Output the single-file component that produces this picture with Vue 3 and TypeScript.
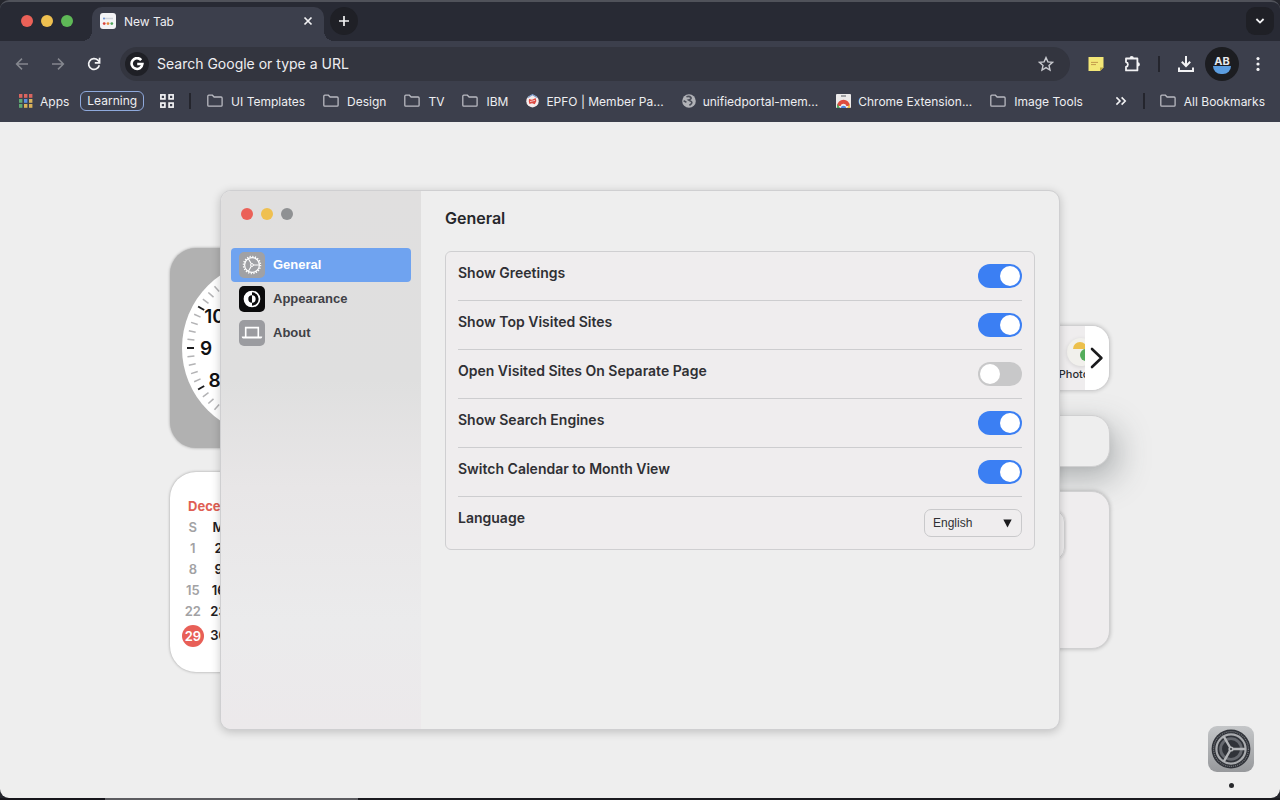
<script setup lang="ts">
import { ref } from 'vue'

interface Bookmark {
  label: string
  icon: 'folder' | 'epfo' | 'globe' | 'store'
}

interface Setting {
  id: string
  label: string
  on: boolean
}

const bookmarks: Bookmark[] = [
  { label: 'UI Templates', icon: 'folder' },
  { label: 'Design', icon: 'folder' },
  { label: 'TV', icon: 'folder' },
  { label: 'IBM', icon: 'folder' },
  { label: 'EPFO | Member Pa...', icon: 'epfo' },
  { label: 'unifiedportal-mem...', icon: 'globe' },
  { label: 'Chrome Extension...', icon: 'store' },
  { label: 'Image Tools', icon: 'folder' },
]

const appColors = ['#d9655f', '#d9655f', '#d9655f', '#5fa873', '#5b8fe0', '#d9b25a', '#5fa873', '#d9b25a', '#d9b25a']

const sections = ['General', 'Appearance', 'About']
const active = ref('General')

const settings = ref<Setting[]>([
  { id: 'greetings', label: 'Show Greetings', on: true },
  { id: 'top-sites', label: 'Show Top Visited Sites', on: true },
  { id: 'separate-page', label: 'Open Visited Sites On Separate Page', on: false },
  { id: 'engines', label: 'Show Search Engines', on: true },
  { id: 'month-view', label: 'Switch Calendar to Month View', on: true },
])
const language = ref('English')
const query = ref('')

const ticks = Array.from({ length: 60 }, (_, i) => i)
const hours = Array.from({ length: 12 }, (_, i) => {
  const angle = ((i + 1) * Math.PI) / 6
  return { n: i + 1, x: 100 + 64 * Math.sin(angle), y: 100 - 64 * Math.cos(angle) }
})

const weekdays = ['S', 'M', 'T', 'W', 'T', 'F', 'S']
const weeks = Array.from({ length: 5 }, (_, w) =>
  Array.from({ length: 7 }, (_, d) => w * 7 + d + 1).map((n) => (n <= 31 ? n : null)),
)
const today = 29
</script>

<template>
  <div class="browser">
    <header class="chrome">
      <div class="tabstrip">
        <div class="lights">
          <span class="light red"></span>
          <span class="light yellow"></span>
          <span class="light green"></span>
        </div>
        <div class="tab">
          <svg class="favicon" viewBox="0 0 16 16" aria-hidden="true">
            <rect width="16" height="16" rx="3" fill="#f3f3f5" />
            <path d="M3 5.5h10" stroke="#cfd3da" stroke-width="1.4" />
            <circle cx="4" cy="5.5" r="1" fill="#6b93d6" />
            <circle cx="4.2" cy="10.6" r="1.4" fill="#d9443c" />
            <circle cx="8" cy="10.6" r="1.4" fill="#e58a3a" />
            <circle cx="11.8" cy="10.6" r="1.4" fill="#4ea35a" />
          </svg>
          <span class="tab-title">New Tab</span>
          <button class="icon-btn tab-close" aria-label="Close tab">
            <svg width="10" height="10" viewBox="0 0 10 10"><path d="M1.5 1.5l7 7M8.5 1.5l-7 7" stroke="#f2f2f4" stroke-width="1.7" /></svg>
          </button>
        </div>
        <button class="icon-btn new-tab" aria-label="New tab">
          <svg width="12" height="12" viewBox="0 0 12 12"><path d="M6 1v10M1 6h10" stroke="#f2f2f4" stroke-width="1.7" /></svg>
        </button>
        <button class="icon-btn tab-search" aria-label="Search tabs">
          <svg width="10" height="8" viewBox="0 0 10 8"><path d="M1.4 2l3.6 3.6L8.6 2" fill="none" stroke="#f2f2f4" stroke-width="1.8" /></svg>
        </button>
      </div>

      <div class="toolbar">
        <button class="icon-btn tool" aria-label="Back">
          <svg width="14" height="14" viewBox="0 0 14 14"><path d="M13 7H2M7 1.6L1.6 7 7 12.4" fill="none" stroke="#85878f" stroke-width="1.5" /></svg>
        </button>
        <button class="icon-btn tool" aria-label="Forward">
          <svg width="14" height="14" viewBox="0 0 14 14"><path d="M1 7h11M7 1.6L12.4 7 7 12.4" fill="none" stroke="#85878f" stroke-width="1.5" /></svg>
        </button>
        <button class="icon-btn tool" aria-label="Reload">
          <svg width="14" height="14" viewBox="0 0 14 14">
            <path d="M12.3 8.2A5.4 5.4 0 1 1 10.9 3.2L12.2 4.6" fill="none" stroke="#f2f2f4" stroke-width="1.7" />
            <path d="M12.6 0.8v5H7.8" fill="none" stroke="#f2f2f4" stroke-width="1.7" />
          </svg>
        </button>
        <div class="omnibox">
          <span class="google">
            <svg width="14" height="14" viewBox="0 0 14 14" aria-hidden="true"><path d="M11.2 3.1A5.4 5.4 0 1 0 12.4 7H7.2" fill="none" stroke="#fff" stroke-width="2.6" /></svg>
          </span>
          <input v-model="query" class="address" type="text" aria-label="Address" placeholder="Search Google or type a URL" />
          <button class="icon-btn star" aria-label="Bookmark this tab">
            <svg width="16" height="16" viewBox="0 0 16 16"><path d="M8 1.6l1.9 4.3 4.6.4-3.5 3.1 1 4.6L8 11.6 4 14l1-4.6L1.5 6.3l4.6-.4z" fill="none" stroke="#c9cacf" stroke-width="1.4" /></svg>
          </button>
        </div>
        <button class="icon-btn tool" aria-label="Sticky notes">
          <svg width="16" height="16" viewBox="0 0 16 16">
            <path d="M0.5 1H15.5V11.5L12 15H0.5z" fill="#f3e777" />
            <path d="M15.5 11.5L12 15v-3.5z" fill="#b9a640" />
            <path d="M3 6.4h7M3 8.6h5" stroke="#c39a4c" stroke-width="1" />
          </svg>
        </button>
        <button class="icon-btn tool" aria-label="Extensions">
          <svg width="18" height="18" viewBox="0 0 18 18">
            <path d="M3 3.5H14.4V15.4H3V11.8A2.4 2.4 0 0 0 3 7.1Z" fill="none" stroke="#f2f2f4" stroke-width="1.8" stroke-linejoin="round" />
            <path d="M6.6 3.2a2.1 2.1 0 0 1 4.2 0zM14.8 7.3a2.1 2.1 0 0 1 0 4.2z" fill="#f2f2f4" />
          </svg>
        </button>
        <span class="rule"></span>
        <button class="icon-btn tool" aria-label="Downloads">
          <svg width="18" height="18" viewBox="0 0 18 18"><path d="M9 1v9.5M4.8 6.8L9 11l4.2-4.2M2 12.5v3.6h14v-3.6" fill="none" stroke="#f2f2f4" stroke-width="2" /></svg>
        </button>
        <button class="icon-btn tool" aria-label="Profile">
          <span class="avatar"><span class="initials">AB</span><span class="sea"></span></span>
        </button>
        <button class="icon-btn tool" aria-label="Menu">
          <svg width="4" height="16" viewBox="0 0 4 16" fill="#f2f2f4"><circle cx="2" cy="2.6" r="1.6" /><circle cx="2" cy="8" r="1.6" /><circle cx="2" cy="13.4" r="1.6" /></svg>
        </button>
      </div>

      <nav class="bookmarks" aria-label="Bookmarks">
        <a class="bookmark apps" href="#">
          <svg width="14" height="14" viewBox="0 0 14 14" aria-hidden="true">
            <rect v-for="(c, i) in appColors" :key="i" :x="(i % 3) * 5" :y="Math.floor(i / 3) * 5" width="3.4" height="3.8" :fill="c" />
          </svg>
          <span>Apps</span>
        </a>
        <a class="chip" href="#">Learning</a>
        <a class="groups" href="#" aria-label="Tab groups">
          <svg width="14" height="14" viewBox="0 0 14 14" fill="none" stroke="#f2f2f4" stroke-width="1.7">
            <rect x="0.9" y="0.9" width="4" height="4" /><rect x="9.1" y="0.9" width="4" height="4" />
            <rect x="0.9" y="9.1" width="4" height="4" /><rect x="9.1" y="9.1" width="4" height="4" />
          </svg>
        </a>
        <span class="rule"></span>
        <div class="links">
          <a v-for="b in bookmarks" :key="b.label" class="bookmark" :class="b.icon" href="#">
            <svg v-if="b.icon === 'folder'" width="16" height="14" viewBox="0 0 16 14" aria-hidden="true">
              <path d="M.8 2.2q0-1 1-1h3.6l1.7 1.8h7q1 0 1 1v7.2q0 1-1 1H1.8q-1 0-1-1z" fill="none" stroke="#b9bac1" stroke-width="1.3" />
            </svg>
            <svg v-else-if="b.icon === 'epfo'" width="13" height="14" viewBox="0 0 13 14" aria-hidden="true">
              <circle cx="6.5" cy="7.2" r="6.2" fill="#f4ecec" />
              <path d="M2.2 3.4L6.5.6l4.3 2.8" fill="none" stroke="#7d9ccc" stroke-width="1.2" />
              <path d="M3 5l3 .8L9.6 4l.8 3-1.6 3.2L6 9.2 3.4 10 2.8 7.4z" fill="#dd4a42" />
              <path d="M4 7.6l5-1.2" stroke="#f6dada" stroke-width=".8" />
            </svg>
            <svg v-else-if="b.icon === 'globe'" width="14" height="14" viewBox="0 0 14 14" aria-hidden="true">
              <circle cx="7" cy="7" r="6.8" fill="#b0b1b6" />
              <path d="M4.4 2.8q3-1 4.4.6T6.6 6L9 7.4q1.6 1 .2 2.4L7.4 11.4M1.6 6.8l2.8 1.4" fill="none" stroke="#4b4e59" stroke-width="1.6" />
            </svg>
            <svg v-else width="15" height="14" viewBox="0 0 15 14" aria-hidden="true">
              <rect width="15" height="14" rx="1" fill="#eceaea" />
              <path d="M5 2h5" stroke="#55585f" stroke-width="1.2" />
              <path d="M1.2 12A6.3 6.3 0 0 1 13.8 12L10.4 12A3 3 0 0 0 4.6 12z" fill="#dc4c40" />
              <path d="M1.2 9.8L4 14H1z" fill="#4aa35a" />
              <path d="M13.8 9.8L11 14h3z" fill="#e9bd45" />
              <path d="M4.6 14a3 3 0 0 1 5.8 0z" fill="#4d86e4" />
            </svg>
            <span>{{ b.label }}</span>
          </a>
        </div>
        <button class="icon-btn more" aria-label="More bookmarks">
          <svg width="12" height="10" viewBox="0 0 12 10"><path d="M1.4 1.4L5 5 1.4 8.6M6.6 1.4L10.2 5 6.6 8.6" fill="none" stroke="#f2f2f4" stroke-width="1.6" /></svg>
        </button>
        <span class="rule all-rule"></span>
        <a class="bookmark folder" href="#">
          <svg width="16" height="14" viewBox="0 0 16 14" aria-hidden="true">
            <path d="M.8 2.2q0-1 1-1h3.6l1.7 1.8h7q1 0 1 1v7.2q0 1-1 1H1.8q-1 0-1-1z" fill="none" stroke="#b9bac1" stroke-width="1.3" />
          </svg>
          <span>All Bookmarks</span>
        </a>
      </nav>
    </header>

    <main class="page">
      <div class="widgets">
        <div class="column">
          <section class="clock" aria-label="Clock">
            <svg viewBox="0 0 200 200">
              <circle cx="100" cy="100" r="88" fill="#fff" />
              <line
                v-for="t in ticks" :key="t" x1="100" y1="17" x2="100" y2="24"
                :stroke="t % 5 ? '#b3b3b5' : '#1c1c1e'" :stroke-width="t % 5 ? 1.5 : 2"
                :transform="`rotate(${t * 6} 100 100)`"
              />
              <text v-for="h in hours" :key="h.n" class="hour" :x="h.x" :y="h.y + 7">{{ h.n }}</text>
            </svg>
          </section>
          <section class="calendar" aria-label="Calendar">
            <table>
              <caption>December</caption>
              <thead>
                <tr><th v-for="(d, i) in weekdays" :key="i" scope="col">{{ d }}</th></tr>
              </thead>
              <tbody>
                <tr v-for="(week, w) in weeks" :key="w">
                  <td v-for="(day, d) in week" :key="d">
                    <span v-if="day" :class="{ today: day === today }">{{ day }}</span>
                  </td>
                </tr>
              </tbody>
            </table>
          </section>
        </div>

        <div class="column feed">
          <section class="sites" aria-label="Top visited sites">
            <div class="site-list">
              <a class="site" href="#">
                <span class="site-icon">
                  <svg width="28" height="28" viewBox="0 0 28 28" aria-hidden="true">
                    <path d="M6 11a7 7 0 0 1 14 0z" fill="#ecc04c" />
                    <path d="M19 11a6 6 0 0 0 0 12z" fill="#54ad5c" />
                  </svg>
                </span>
                <span>Photos</span>
              </a>
            </div>
            <button class="icon-btn next" aria-label="Next sites">
              <svg width="14" height="22" viewBox="0 0 14 22"><path d="M2 2l9.4 9L2 20" fill="none" stroke="#1b1b1d" stroke-width="2.6" stroke-linecap="round" stroke-linejoin="round" /></svg>
            </button>
          </section>
          <div class="search-card"></div>
          <div class="engines"><div class="engine"></div></div>
        </div>
      </div>

      <section class="window" aria-label="Settings">
        <aside class="sidebar">
          <div class="dots">
            <span class="light red"></span>
            <span class="light yellow"></span>
            <span class="light grey"></span>
          </div>
          <nav class="sections">
            <button v-for="s in sections" :key="s" class="section" :class="{ active: active === s }" @click="active = s">
              <svg v-if="s === 'General'" width="26" height="26" viewBox="0 0 26 26" aria-hidden="true">
                <rect width="26" height="26" rx="5" fill="#a0a1a5" />
                <g fill="none" stroke="#fff">
                  <circle cx="13" cy="13" r="7.4" stroke-width="1.2" />
                  <circle cx="13" cy="13" r="8.5" stroke-width="1.5" stroke-dasharray="1.2 1.47" />
                  <path d="M13 13h7.2M13 13L9.4 6.8M13 13l-3.6 6.2" stroke-width="1.1" />
                  <circle cx="13" cy="13" r="1.4" fill="#a0a1a5" stroke-width="1" />
                </g>
              </svg>
              <svg v-else-if="s === 'Appearance'" width="26" height="26" viewBox="0 0 26 26" aria-hidden="true">
                <rect width="26" height="26" rx="5" fill="#0b0b0c" />
                <circle cx="13" cy="13" r="7.5" fill="none" stroke="#fff" stroke-width="1.7" />
                <path d="M13 5.6a7.4 7.4 0 0 0 0 14.8v-3.7a3.7 3.7 0 0 1 0-7.4z" fill="#fff" />
                <path d="M13 9.3a3.7 3.7 0 0 1 0 7.4z" fill="#fff" />
              </svg>
              <svg v-else width="26" height="26" viewBox="0 0 26 26" aria-hidden="true">
                <rect width="26" height="26" rx="5" fill="#9b9ca0" />
                <path d="M6.7 17V7.6h12.6V17" fill="none" stroke="#fff" stroke-width="1.6" />
                <path d="M2.8 16.4h20.4v.6q0 1.4-1.4 1.4H4.2q-1.4 0-1.4-1.4z" fill="#fff" />
              </svg>
              <span>{{ s }}</span>
            </button>
          </nav>
        </aside>
        <div class="panel">
          <h1>{{ active }}</h1>
          <div class="settings">
            <div v-for="item in settings" :key="item.id" class="row">
              <label :for="item.id">{{ item.label }}</label>
              <input :id="item.id" v-model="item.on" class="switch" type="checkbox" role="switch" />
            </div>
            <div class="row">
              <label for="language">Language</label>
              <div class="select">
                <select id="language" v-model="language">
                  <option>English</option>
                </select>
                <svg class="caret" width="9" height="9" viewBox="0 0 9 9" aria-hidden="true"><path d="M.3.5h8.4L4.5 8.6z" fill="#1b1b1d" /></svg>
              </div>
            </div>
          </div>
        </div>
      </section>

      <button class="icon-btn launcher" aria-label="Open settings">
        <svg width="46" height="46" viewBox="0 0 46 46">
          <defs>
            <linearGradient id="metal" x1="0" y1="0" x2="0" y2="1">
              <stop offset="0" stop-color="#c4c6c8" />
              <stop offset="1" stop-color="#97999c" />
            </linearGradient>
          </defs>
          <rect width="46" height="46" rx="9" fill="url(#metal)" />
          <circle cx="23" cy="23" r="19.4" fill="#303339" />
          <g fill="none">
            <circle cx="23" cy="23" r="17.4" stroke="#77797e" stroke-width="1.2" stroke-dasharray="1 1" />
            <circle cx="23" cy="23" r="14.6" stroke="#a9abae" stroke-width="2.2" />
            <circle cx="23" cy="23" r="10.4" stroke="#66696f" stroke-width="2.8" />
            <path d="M23 23h14.5M23 23L15.7 10.4M23 23l-7.3 12.6" stroke="#b4b6b9" stroke-width="2.4" />
          </g>
          <circle cx="23" cy="23" r="2.6" fill="#b4b6b9" />
          <circle cx="23" cy="23" r="1" fill="#35383e" />
        </svg>
        <span class="running"></span>
      </button>
    </main>
    <div class="desktop-edge"></div>
  </div>
</template>

<style>
html,
body {
  background: #25262d;
}
</style>

<style scoped>
* {
  box-sizing: border-box;
}

.browser {
  display: flex;
  flex-direction: column;
  min-height: 100vh;
  font-family: Inter, 'Liberation Sans', sans-serif;
}

svg {
  display: block;
  flex: none;
}

a {
  color: inherit;
  text-decoration: none;
}

.icon-btn {
  display: flex;
  flex: none;
  align-items: center;
  justify-content: center;
  padding: 0;
  border: 0;
  background: none;
}

.light {
  width: 12px;
  height: 12px;
  border-radius: 50%;
}

.red { background: #eb6158; }
.yellow { background: #efc050; }
.green { background: #5fb957; }
.grey { background: #8f9193; }

.chrome {
  background: #3c3f4c;
  color: #eeeef1;
  border-top: 2px solid #50525a;
  border-radius: 9px 9px 0 0;
  overflow: hidden;
}

.tabstrip {
  display: flex;
  align-items: flex-end;
  height: 39px;
  padding: 0 6px 0 21px;
  background: #282a34;
}

.lights {
  display: flex;
  gap: 8px;
  width: 71px;
  padding-bottom: 14px;
}

.tab {
  position: relative;
  display: flex;
  align-items: center;
  width: 232px;
  height: 34px;
  padding: 0 10px 6px 8px;
  border-radius: 10px 10px 0 0;
  background: #3c3f4c;
}

.tab::before,
.tab::after {
  content: '';
  position: absolute;
  bottom: 0;
  width: 10px;
  height: 10px;
}

.tab::before {
  right: 100%;
  background: radial-gradient(circle at 0 0, transparent 10px, #3c3f4c 10px);
}

.tab::after {
  left: 100%;
  background: radial-gradient(circle at 100% 0, transparent 10px, #3c3f4c 10px);
}

.favicon {
  width: 16px;
  height: 16px;
  margin-right: 8px;
}

.tab-title {
  flex: 1;
  font-size: 12px;
  font-weight: 400;
}

.new-tab,
.tab-search {
  width: 28px;
  height: 28px;
  margin-bottom: 6px;
  border-radius: 50%;
  background: #1f2026;
}

.new-tab {
  margin-left: 6px;
}

.tab-search {
  margin-left: auto;
  border-radius: 9px;
}

.tab-close {
  width: 12px;
  height: 16px;
}

.toolbar {
  display: flex;
  align-items: center;
  height: 46px;
  padding: 0 4px;
}

.tool {
  width: 36px;
  height: 36px;
}

.omnibox {
  display: flex;
  flex: 1;
  align-items: center;
  min-width: 0;
  height: 34px;
  margin: 0 8px;
  padding: 0 16px 0 5px;
  border-radius: 17px;
  background: #33353f;
}

.google {
  display: flex;
  align-items: center;
  justify-content: center;
  width: 24px;
  height: 24px;
  margin-right: 8px;
  border-radius: 50%;
  background: #1f2026;
}

.address {
  flex: 1;
  min-width: 0;
  padding: 0;
  border: 0;
  outline: 0;
  background: none;
  color: #eeeef1;
  font: 14px/20px Inter, 'Liberation Sans', sans-serif;
}

.address::placeholder {
  color: #eeeef1;
  opacity: 1;
}

.rule {
  flex: none;
  width: 2px;
  height: 16px;
  margin: 0 8px;
  background: #24252d;
}

.avatar {
  display: flex;
  flex-direction: column;
  align-items: center;
  justify-content: center;
  width: 34px;
  height: 34px;
  padding-top: 2px;
  border-radius: 50%;
  background: #1c1d21;
}

.initials {
  color: #e8eaee;
  font: 700 11px/9px Inter, 'Liberation Sans', sans-serif;
}

.sea {
  width: 18px;
  height: 8px;
  border-radius: 0 0 9px 9px;
  background: #5b9de0;
}

.bookmarks {
  display: flex;
  align-items: center;
  height: 35px;
  padding: 0 15px 7px 19px;
  font-size: 12px;
  font-weight: 400;
  white-space: nowrap;
}

.bookmark {
  display: flex;
  align-items: center;
  gap: 7px;
}

.bookmark.folder {
  gap: 8px;
}

.chip {
  margin: 0 16px 0 11px;
  padding: 0 6px;
  border: 1px solid #8fa9dc;
  border-radius: 6px;
  line-height: 18px;
}

.groups {
  margin-right: 7px;
}

.links {
  display: flex;
  flex: 1;
  gap: 18px;
  min-width: 0;
  margin-left: 8px;
  overflow: hidden;
}

.more {
  width: 12px;
  margin-right: 8px;
}

.all-rule {
  margin-right: 15px;
}

.page {
  position: relative;
  display: flex;
  flex: 1;
  align-items: center;
  justify-content: center;
  padding: 60px 40px;
  border-radius: 0 0 9px 9px;
  background: #eeeeee;
}

.widgets {
  display: flex;
  flex: 1;
  gap: 24px;
  align-items: center;
  max-width: 940px;
}

.column {
  display: flex;
  flex: none;
  flex-direction: column;
  gap: 24px;
}

.feed {
  flex: 1;
  padding-top: 53px;
}

.clock,
.calendar {
  width: 200px;
  height: 200px;
  border-radius: 26px;
  box-shadow: 0 0 3px rgba(0, 0, 0, 0.35);
}

.clock {
  background: #b1b1b1;
}

.hour {
  fill: #111113;
  font-size: 19px;
  font-weight: 600;
  text-anchor: middle;
}

.calendar {
  padding: 24px 10px 0;
  background: #fff;
  color: #1f2024;
  font-size: 13px;
  font-weight: 600;
}

.calendar table {
  width: 100%;
  border-spacing: 0;
  table-layout: fixed;
}

.calendar caption {
  padding-left: 8px;
  color: #df5f54;
  font-weight: 700;
  line-height: 21px;
  text-align: left;
}

.calendar th,
.calendar td {
  height: 21px;
  padding: 0;
  font-weight: 600;
  line-height: 21px;
  text-align: center;
}

.calendar th:first-child,
.calendar td:first-child {
  color: #a2a2a4;
}

.calendar tr:last-child td {
  height: 27px;
}

.calendar .today {
  display: block;
  width: 22px;
  margin: 0 auto;
  border-radius: 50%;
  background: #e85f57;
  color: #fff;
  line-height: 22px;
}

.sites,
.search-card,
.engines {
  border: 1px solid #d0d0d1;
  border-radius: 18px;
  background: #efedee;
}

.sites {
  display: flex;
  height: 66px;
  overflow: hidden;
  box-shadow: 0 0 4px rgba(0, 0, 0, 0.2);
}

.site-list {
  display: flex;
  flex: 1;
  justify-content: flex-end;
  overflow: hidden;
}

.site {
  display: flex;
  flex: none;
  flex-direction: column;
  align-items: center;
  width: 40px;
  margin-right: -12px;
  padding-top: 12px;
  color: #2b2c30;
  font-size: 11px;
  font-weight: 500;
  line-height: 16px;
}

.site-icon {
  width: 28px;
  height: 28px;
  margin-left: 8px;
  border-radius: 50%;
  background: #f1f0ec;
  box-shadow: 0 1px 4px rgba(0, 0, 0, 0.12);
}

.next {
  width: 24px;
  background: #fff;
}

.search-card {
  height: 52px;
  background: #eeeeee;
  box-shadow: 8px 12px 32px rgba(60, 68, 72, 0.35), 0 0 8px rgba(0, 0, 0, 0.06);
}

.engines {
  position: relative;
  height: 158px;
  padding: 18px 44px 0;
  box-shadow: 0 0 4px rgba(0, 0, 0, 0.25);
}

.engine {
  height: 50px;
  border: 1px solid #d0d0d1;
  border-radius: 12px;
  box-shadow: 0 0 3px rgba(0, 0, 0, 0.25);
}

.window {
  position: absolute;
  inset: 0;
  display: flex;
  width: 840px;
  max-width: 100%;
  height: 540px;
  margin: auto;
  border: 1px solid #cfcfd1;
  border-radius: 11px;
  overflow: hidden;
  background: #eeeeee;
  box-shadow: 0 2px 10px rgba(0, 0, 0, 0.2);
}

.sidebar {
  flex: none;
  width: 200px;
  padding: 17px 10px;
  background: linear-gradient(180deg, #e0dfdf 0%, #dfdfdf 35%, #e8e6e7 55%, #ebebec 80%, #ece9eb 100%);
}

.dots {
  display: flex;
  gap: 8px;
  padding: 0 10px;
}

.sections {
  display: flex;
  flex-direction: column;
  margin-top: 28px;
}

.section {
  display: flex;
  align-items: center;
  gap: 8px;
  height: 34px;
  padding: 0 8px;
  border: 0;
  border-radius: 4px;
  background: none;
  color: #404146;
  font: 700 13px/16px 'Liberation Sans', sans-serif;
}

.section.active {
  background: #6fa3f0;
  color: #fff;
}

.panel {
  flex: 1;
  min-width: 0;
  padding: 15px 24px;
}

h1 {
  margin: 0 0 21px;
  color: #26272b;
  font-size: 16px;
  font-weight: 600;
  line-height: 24px;
}

.settings {
  padding: 0 12px;
  border: 1px solid #cfcfd1;
  border-radius: 6px;
  background: #efedee;
}

.row {
  display: flex;
  align-items: flex-start;
  justify-content: space-between;
  padding: 12px 0;
}

.row + .row {
  border-top: 1px solid #cdcdcf;
}

.row label {
  color: #2f3034;
  font-size: 14px;
  font-weight: 600;
  line-height: 18px;
}

.switch {
  display: flex;
  align-items: center;
  width: 44px;
  height: 24px;
  margin: 0;
  padding: 2px;
  border-radius: 12px;
  background: #c8c8c9;
  appearance: none;
}

.switch::before {
  content: '';
  width: 20px;
  height: 20px;
  border-radius: 50%;
  background: #fff;
}

.switch:checked {
  justify-content: flex-end;
  background: #3b7ff3;
}

.select {
  position: relative;
}

.select select {
  display: block;
  width: 98px;
  height: 28px;
  padding: 0 8px;
  border: 1px solid #c9c9cb;
  border-radius: 7px;
  background: #efedee;
  color: #2f3034;
  font: 12px/16px 'Liberation Sans', sans-serif;
  appearance: none;
}

.caret {
  position: absolute;
  top: 10px;
  right: 10px;
  pointer-events: none;
}

.launcher {
  position: absolute;
  right: 26px;
  bottom: 10px;
  flex-direction: column;
  gap: 11px;
}

.running {
  width: 5px;
  height: 5px;
  border-radius: 50%;
  background: #26272b;
}

.desktop-edge {
  height: 2px;
  background: linear-gradient(90deg, #16151b 105px, #5c5c60 105px 358px, #1a1a1f 358px);
}
</style>
